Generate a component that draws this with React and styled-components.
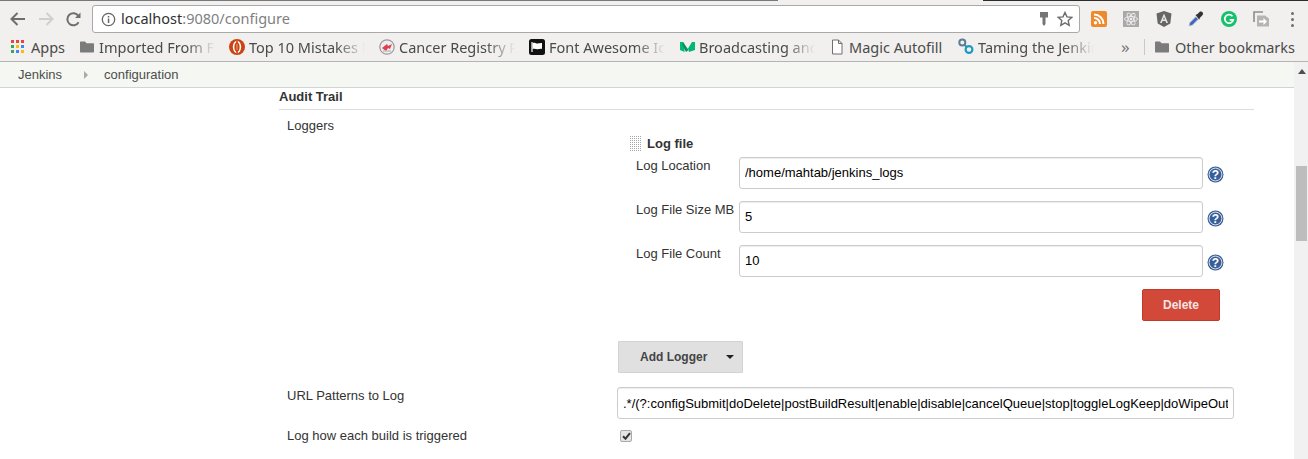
import React from "react";
import styled, { createGlobalStyle } from "styled-components";

const GlobalStyle = createGlobalStyle`
  html, body {
    margin: 0;
    padding: 0;
    background: #fff;
    overflow: hidden;
  }
  * {
    box-sizing: border-box;
  }
`;

const bookmarks = [
  { id: "folder", name: "Imported From Firefox", clipped: true },
  { id: "top10", name: "Top 10 Mistakes Node", clipped: true },
  { id: "cancer", name: "Cancer Registry Portal", clipped: true },
  { id: "flag", name: "Font Awesome Icons", clipped: true },
  { id: "medium", name: "Broadcasting and more", clipped: true },
  { id: "doc", name: "Magic Autofill" },
  { id: "taming", name: "Taming the Jenkins", clipped: true },
];

const fields = [
  { label: "Log Location", value: "/home/mahtab/jenkins_logs" },
  { label: "Log File Size MB", value: "5" },
  { label: "Log File Count", value: "10" },
];

const urlPattern =
  ".*/(?:configSubmit|doDelete|postBuildResult|enable|disable|cancelQueue|stop|toggleLogKeep|doWipeOutWorkspace|createItem|createView|toggleOffline)/?.*";

const FolderIcon = () => (
  <svg width="14" height="16" viewBox="0 0 14 16">
    <path d="M0 3.500c0-.6.4-1 1-1h4l1.500 1.700H13c.6 0 1 .4 1 1v7.300c0 .6-.4 1-1 1H1c-.6 0-1-.4-1-1z" fill="#7b7b7b" />
  </svg>
);

const AppsIcon = () => (
  <svg width="13" height="13" viewBox="0 0 13 13">
    {[
      [0, 0, "#e8453c"], [5, 0, "#e8453c"], [10, 0, "#e8453c"],
      [0, 5, "#34a853"], [5, 5, "#fbbc05"], [10, 5, "#4285f4"],
      [0, 10, "#34a853"], [5, 10, "#4285f4"], [10, 10, "#fbbc05"],
    ].map(([x, y, c]) => (
      <rect key={`${x}-${y}`} x={x} y={y} width="3" height="3" fill={c} />
    ))}
  </svg>
);

const BookmarkIcon = ({ id }) => {
  if (id === "folder") return <FolderIcon />;
  if (id === "top10")
    return (
      <svg width="16" height="16" viewBox="0 0 16 16">
        <circle cx="8" cy="8" r="8" fill="#cc4312" />
        <ellipse cx="8" cy="8" rx="3.400" ry="5.400" fill="none" stroke="#fff" strokeWidth="1.600" />
        <rect x="7.200" y="2" width="1.600" height="2.400" fill="#cc4312" />
        <rect x="7.200" y="11.600" width="1.600" height="2.400" fill="#cc4312" />
        <rect x="7.300" y="5" width="1.400" height="6" fill="#e08a63" />
      </svg>
    );
  if (id === "cancer")
    return (
      <svg width="16" height="16" viewBox="0 0 16 16">
        <circle cx="8" cy="8" r="7.200" fill="#eee" stroke="#9a9a9a" strokeWidth="1.200" />
        <path d="M3 9l5-4 1 2 4-2-2 5-2-1-2 3z" fill="#df4050" />
        <path d="M4 12h8" stroke="#b5b5b5" strokeWidth="1.200" />
      </svg>
    );
  if (id === "flag")
    return (
      <svg width="16" height="16" viewBox="0 0 16 16">
        <rect width="16" height="16" rx="2.500" fill="#111" />
        <path d="M3 3v10" stroke="#fff" strokeWidth="1.200" />
        <path d="M3.500 4c2-1 3.500.4 5 .4S11.500 3.600 13 4v6c-1.800-.6-3 .3-4.500.3S5.500 9.200 3.500 10z" fill="#fff" />
      </svg>
    );
  if (id === "medium")
    return (
      <svg width="15" height="16" viewBox="0 0 15 16">
        <path d="M0 3h3l1.500 2.500V13L0 11z" fill="#02b875" />
        <path d="M3 3l5.500 8L6 13 2.500 6z" fill="#0a8f5e" />
        <path d="M15 3h-3L8 9.500 9 13l6-2z" fill="#02b875" />
      </svg>
    );
  if (id === "doc")
    return (
      <svg width="14" height="16" viewBox="0 0 14 16">
        <path d="M2.500 1H8.500L12 4.500V15H2.500zM8.500 1v3.500H12" fill="#fff" stroke="#6f6f6f" strokeWidth="1" />
      </svg>
    );
  return (
    <svg width="16" height="17" viewBox="0 0 16 17">
      <circle cx="4.300" cy="4.500" r="3" fill="none" stroke="#5b7d95" strokeWidth="2" />
      <circle cx="11" cy="11.500" r="3.400" fill="none" stroke="#1f9ac0" strokeWidth="2.200" />
      <path d="M6.500 6.500l2 2.500" stroke="#3b8aaa" strokeWidth="2" />
    </svg>
  );
};

const HelpIcon = () => (
  <HelpSvg viewBox="0 0 17 17">
    <circle cx="8.500" cy="8.500" r="8" fill="#3a5f98" />
    <circle cx="8.500" cy="8.500" r="6.400" fill="none" stroke="#fff" strokeWidth="0.800" />
    <text x="8.500" y="12.800" textAnchor="middle" fontFamily="Liberation Sans, sans-serif" fontWeight="700" fontSize="12" fill="#fff">?</text>
  </HelpSvg>
);

export default function App() {
  return (
    <Page>
      <GlobalStyle />
      <TopStrip>
        <StripPart $w={778} $c="#77787a" />
        <StripPart $w={205} $c="#f1f0ee" />
        <StripPart $w={325} $c="#2b2b2b" />
      </TopStrip>

      <Toolbar>
        <NavButtons>
          <svg width="16" height="14" viewBox="0 0 16 14">
            <path d="M15 7H2M7.500 1L1.500 7l6 6" stroke="#6e6e6e" strokeWidth="2" fill="none" />
          </svg>
          <svg width="16" height="14" viewBox="0 0 16 14">
            <path d="M1 7h13M8.500 1l6 6-6 6" stroke="#cfcfcf" strokeWidth="2" fill="none" />
          </svg>
          <svg width="15" height="15" viewBox="0 0 15 15">
            <path d="M12.600 10.200A6 6 0 1 1 12.400 4" stroke="#6e6e6e" strokeWidth="2" fill="none" />
            <path d="M14.500 0.500v5.500H9z" fill="#6e6e6e" />
          </svg>
        </NavButtons>
        <AddressBar>
          <svg width="15" height="15" viewBox="0 0 15 15">
            <circle cx="7.500" cy="7.500" r="6.200" fill="none" stroke="#666" strokeWidth="1.300" />
            <rect x="6.800" y="6.500" width="1.500" height="4.500" fill="#666" />
            <rect x="6.800" y="4" width="1.500" height="1.500" fill="#666" />
          </svg>
          <Url>
            localhost<UrlRest>:9080/configure</UrlRest>
          </Url>
          <AddressIcons>
            <svg width="10" height="14" viewBox="0 0 10 14">
              <path d="M1 0h8v5.500H6.500v6.500L5 14l-1.500-2V5.500H1z" fill="#757575" />
            </svg>
            <svg width="16" height="16" viewBox="0 0 16 16">
              <path d="M8 1.500l2 4.400 4.700.5-3.500 3.200 1 4.700L8 11.900l-4.200 2.400 1-4.700-3.500-3.200 4.700-.5z" fill="none" stroke="#6b6b6b" strokeWidth="1.400" />
            </svg>
          </AddressIcons>
        </AddressBar>
        <Extensions>
          <svg width="16" height="16" viewBox="0 0 16 16">
            <rect width="16" height="16" rx="2" fill="#ef8a2c" />
            <circle cx="4.500" cy="11.700" r="1.700" fill="#fff" />
            <path d="M3 7a6 6 0 0 1 6 6M3 3.500A9.500 9.500 0 0 1 12.500 13" stroke="#fff" strokeWidth="2" fill="none" />
          </svg>
          <svg width="16" height="16" viewBox="0 0 16 16">
            <rect width="16" height="16" fill="#a9a9a9" />
            <g fill="none" stroke="#eee" strokeWidth="0.900">
              <ellipse cx="8" cy="8" rx="6.500" ry="2.500" />
              <ellipse cx="8" cy="8" rx="6.500" ry="2.500" transform="rotate(60 8 8)" />
              <ellipse cx="8" cy="8" rx="6.500" ry="2.500" transform="rotate(120 8 8)" />
            </g>
            <circle cx="8" cy="8" r="1.300" fill="#eee" />
          </svg>
          <svg width="16" height="16" viewBox="0 0 16 16">
            <path d="M8 0l7.500 2.600-1.200 9.800L8 16l-6.300-3.600L.5 2.600z" fill="#666" />
            <path d="M8 2.500L4 12h1.700l.8-2h3l.8 2H12zM7.100 8.500L8 6l.9 2.500z" fill="#e6e6e6" />
          </svg>
          <svg width="16" height="16" viewBox="0 0 16 16">
            <path d="M1 15l.8-3.300 6-6 2.500 2.500-6 6z" fill="#3c66c4" stroke="#c4c4c4" strokeWidth="0.800" />
            <path d="M7.500 4l2-1 2-2c1-.8 2.600-.4 3.200.5s.4 2.200-.5 3l-2 2-1 2z" fill="#333" />
          </svg>
          <svg width="16" height="16" viewBox="0 0 16 16">
            <circle cx="8" cy="8" r="8" fill="#15c26b" />
            <path d="M11.500 5.200A4.300 4.300 0 1 0 12.300 8.800H8.700" stroke="#fff" strokeWidth="1.700" fill="none" />
          </svg>
          <svg width="16" height="16" viewBox="0 0 16 16">
            <path d="M1 11V1h9" fill="none" stroke="#8d8d8d" strokeWidth="1.600" />
            <path d="M4 4.500h8l4 3v8H4z" fill="#b4b4b4" />
            <path d="M6 9.500h4.500V7l3.500 3.500-3.500 3.500v-2.500H6z" fill="#fff" />
          </svg>
          <Dots>
            <i />
            <i />
            <i />
          </Dots>
        </Extensions>
      </Toolbar>

      <BookmarkBar>
        <Bookmark $apps>
          <AppsIcon />
          <BookmarkLabel>Apps</BookmarkLabel>
        </Bookmark>
        {bookmarks.map((b) => (
          <Bookmark key={b.id} $clipped={b.clipped}>
            <IconSlot>
              <BookmarkIcon id={b.id} />
            </IconSlot>
            <BookmarkLabel $clipped={b.clipped}>{b.name}</BookmarkLabel>
          </Bookmark>
        ))}
        <Chevrons>»</Chevrons>
        <Separator />
        <OtherBookmarks>
          <FolderIcon />
          <BookmarkLabel>Other bookmarks</BookmarkLabel>
        </OtherBookmarks>
      </BookmarkBar>

      <Viewport>
        <Main>
          <Breadcrumbs>
            <Crumb>Jenkins</Crumb>
            <CrumbArrow />
            <Crumb>configuration</Crumb>
          </Breadcrumbs>
          <Form>
            <SectionHeader>Audit Trail</SectionHeader>
            <FormRow>
              <RowLabel $top={7}>Loggers</RowLabel>
              <div>
                <LoggerBlock>
                  <LoggerHeading>
                    <Grip />
                    <LoggerTitle>Log file</LoggerTitle>
                  </LoggerHeading>
                  {fields.map((f) => (
                    <FieldRow key={f.label}>
                      <FieldLabel>{f.label}</FieldLabel>
                      <TextInput readOnly value={f.value} />
                      <HelpIcon />
                    </FieldRow>
                  ))}
                  <DeleteRow>
                    <DeleteButton>Delete</DeleteButton>
                  </DeleteRow>
                </LoggerBlock>
                <AddLogger>
                  Add Logger
                  <Caret />
                </AddLogger>
              </div>
            </FormRow>
            <UrlRow>
              <RowLabel>URL Patterns to Log</RowLabel>
              <TextInput readOnly value={urlPattern} $wide />
            </UrlRow>
            <CheckRow>
              <RowLabel>Log how each build is triggered</RowLabel>
              <CheckBox>
                <svg width="9" height="8" viewBox="0 0 9 8">
                  <path d="M1 4.200l2.500 2.500L8 1.200" stroke="#333" strokeWidth="2" fill="none" />
                </svg>
              </CheckBox>
            </CheckRow>
          </Form>
        </Main>
        <ScrollTrack>
          <ScrollUp />
          <ScrollThumb />
        </ScrollTrack>
      </Viewport>
    </Page>
  );
}

const Page = styled.div`
  width: 1308px;
  height: 459px;
  display: flex;
  flex-direction: column;
  overflow: hidden;
  font-family: "Liberation Sans", Arial, sans-serif;
  font-size: 13px;
  color: #333;
`;
const TopStrip = styled.div`
  display: flex;
  height: 1px;
`;
const StripPart = styled.div`
  width: ${(p) => p.$w}px;
  background: ${(p) => p.$c};
`;
const Toolbar = styled.div`
  height: 32px;
  display: flex;
  align-items: center;
  background: #f1f0ee;
  padding: 4px 0 0 10px;
`;
const NavButtons = styled.div`
  width: 82px;
  display: flex;
  align-items: center;
  gap: 12px;
`;
const AddressBar = styled.div`
  width: 988px;
  height: 28px;
  display: flex;
  align-items: center;
  gap: 5px;
  padding: 0 6px 0 8px;
  background: #fff;
  border: 1px solid #a9a9a9;
  border-radius: 3px;
`;
const Url = styled.div`
  flex: 1;
  padding-bottom: 2px;
  font-family: "Noto Sans", sans-serif;
  font-size: 14.500px;
  color: #303030;
`;
const UrlRest = styled.span`
  color: #7f7f7f;
`;
const AddressIcons = styled.div`
  display: flex;
  align-items: center;
  gap: 8px;
`;
const Extensions = styled.div`
  display: flex;
  align-items: center;
  gap: 16.400px;
  margin-left: 11px;
`;
const Dots = styled.div`
  display: flex;
  flex-direction: column;
  gap: 3px;
  margin-left: 6px;
  i {
    width: 3px;
    height: 3px;
    border-radius: 50%;
    background: #6e6e6e;
  }
`;
const BookmarkBar = styled.div`
  height: 29px;
  display: flex;
  align-items: center;
  padding: 0 0 1px 11px;
  background: #f1f0ee;
  border-bottom: 1px solid #b4b4b4;
  font-family: "Noto Sans", sans-serif;
  font-size: 14.500px;
  color: #4a4a4a;
`;
const Bookmark = styled.div`
  display: flex;
  align-items: center;
  gap: ${(p) => (p.$apps ? 7 : 4)}px;
  width: ${(p) => (p.$apps ? 68 : p.$clipped ? 150 : 129)}px;
`;
const IconSlot = styled.span`
  display: flex;
  justify-content: center;
  width: 16px;
`;
const BookmarkLabel = styled.span`
  white-space: nowrap;
  overflow: hidden;
  ${(p) =>
    p.$clipped &&
    `
    width: 116px;
    mask-image: linear-gradient(90deg, #000 75%, transparent 100%);
  `}
`;
const Chevrons = styled.span`
  width: 16px;
  margin-left: 13px;
  font-size: 17px;
  line-height: 20px;
  color: #777;
`;
const Separator = styled.span`
  width: 1px;
  height: 16px;
  margin: 0 10px 0 7px;
  background: #c9c9c9;
`;
const OtherBookmarks = styled.div`
  display: flex;
  align-items: center;
  gap: 6px;
`;
const Viewport = styled.div`
  flex: 1;
  min-height: 0;
  display: flex;
`;
const Main = styled.div`
  width: 1294px;
`;
const Breadcrumbs = styled.div`
  height: 26px;
  display: flex;
  align-items: center;
  padding-left: 18px;
  background: #f5f7f2;
  border-bottom: 1px solid #d3d3d3;
`;
const Crumb = styled.span`
  color: #4d4d4d;
`;
const CrumbArrow = styled.span`
  width: 0;
  height: 0;
  margin: 0 16px 0 22px;
  border-left: 4px solid #aaa;
  border-top: 4px solid transparent;
  border-bottom: 4px solid transparent;
`;
const Form = styled.div`
  width: 975px;
  margin-left: 279px;
`;
const SectionHeader = styled.div`
  height: 22px;
  font-weight: 700;
  line-height: 17px;
  border-bottom: 1px solid #dcdcdc;
`;
const FormRow = styled.div`
  display: grid;
  grid-template-columns: 330px 617px;
  padding-left: 8px;
`;
const RowLabel = styled.div`
  line-height: 17px;
  padding-top: ${(p) => p.$top || 0}px;
`;
const LoggerBlock = styled.div`
  padding: 24px 0 0 12px;
`;
const LoggerHeading = styled.div`
  display: flex;
  align-items: center;
  gap: 6px;
  height: 18px;
`;
const Grip = styled.span`
  width: 12px;
  height: 17px;
  background: linear-gradient(90deg, #fff 1px, transparent 1px) 0 0 / 2px 2px,
    linear-gradient(#fff 1px, #a8a8a8 1px) 0 0 / 2px 2px;
`;
const LoggerTitle = styled.span`
  font-weight: 700;
`;
const FieldRow = styled.div`
  display: flex;
  align-items: flex-start;
  margin: 5px 0 12px 7px;
  & + & {
    margin-top: 0;
  }
`;
const FieldLabel = styled.div`
  width: 103px;
  flex: none;
  line-height: 17px;
`;
const TextInput = styled.input`
  width: ${(p) => (p.$wide ? "617px" : "464px")};
  height: 32px;
  flex: none;
  padding: 0 5px ${(p) => (p.$wide ? 0 : 2)}px;
  border: 1px solid #ccc;
  border-radius: 3px;
  outline: none;
  box-shadow: inset 0 1px 1px rgba(0, 0, 0, 0.075);
  font-family: "Liberation Sans", Arial, sans-serif;
  font-size: 13px;
  color: #000;
`;
const HelpSvg = styled.svg`
  width: 17px;
  height: 17px;
  margin: 9px 0 0 4px;
  flex: none;
`;
const DeleteRow = styled.div`
  display: flex;
  justify-content: flex-end;
  width: 591px;
`;
const DeleteButton = styled.button`
  width: 78px;
  height: 32px;
  padding: 0;
  background: #d24939;
  border: 1px solid #c13b2c;
  border-radius: 2px;
  color: #f5e4e2;
  font-family: inherit;
  font-size: 12px;
  font-weight: 700;
`;
const AddLogger = styled.button`
  display: flex;
  align-items: center;
  width: 125px;
  height: 32px;
  margin: 20px 0 0 1px;
  padding: 0 0 0 21px;
  background: #e0e0e0;
  border: 1px solid #d2d2d2;
  border-radius: 1px;
  color: #444;
  font-family: inherit;
  font-size: 12px;
  font-weight: 700;
`;
const Caret = styled.span`
  width: 0;
  height: 0;
  margin-left: 19px;
  border-top: 4px solid #222;
  border-left: 4px solid transparent;
  border-right: 4px solid transparent;
`;
const UrlRow = styled(FormRow)`
  margin-top: 14px;
`;
const CheckRow = styled(FormRow)`
  align-items: center;
  margin-top: 8px;
`;
const CheckBox = styled.span`
  display: flex;
  align-items: center;
  justify-content: center;
  width: 12px;
  height: 12px;
  margin-left: 3px;
  background: #e4e4e4;
  border: 1px solid #aaa;
  border-radius: 2px;
`;
const ScrollTrack = styled.div`
  width: 14px;
  padding: 7px 1px 0 2px;
  background: #f1f1f1;
`;
const ScrollUp = styled.div`
  width: 0;
  height: 0;
  margin: 0 auto;
  border-bottom: 5px solid #505050;
  border-left: 4px solid transparent;
  border-right: 4px solid transparent;
`;
const ScrollThumb = styled.div`
  height: 75px;
  margin-top: 92px;
  background: #bdbdbd;
`;
